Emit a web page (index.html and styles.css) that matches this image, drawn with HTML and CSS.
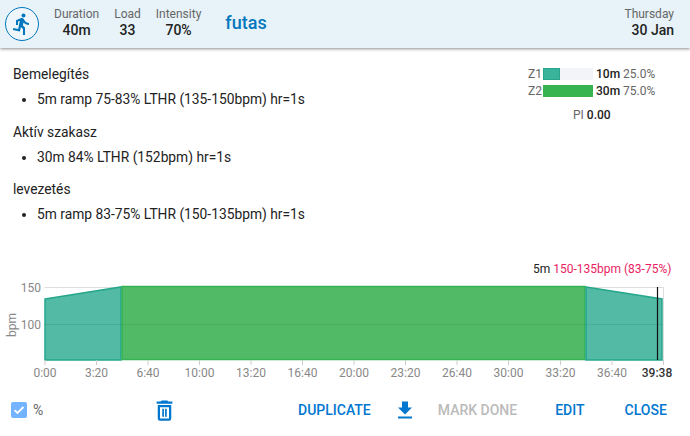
FILE: index.html
```html
<!DOCTYPE html>
<html lang="en">
<head>
<meta charset="utf-8">
<title>futas</title>
<link rel="stylesheet" href="styles.css">
</head>
<body>
<div class="dialog">
  <header class="head">
    <div class="avatar">
      <svg viewBox="0 0 24 24" width="24" height="24"><path fill="#0277bd" d="M13.49 5.48c1.1 0 2-.9 2-2s-.9-2-2-2-2 .9-2 2 .9 2 2 2zm-3.6 13.9l1-4.4 2.1 2v6h2v-7.5l-2.1-2 .6-3c1.3 1.5 3.3 2.5 5.5 2.5v-2c-1.9 0-3.5-1-4.3-2.4l-1-1.6c-.4-.6-1-1-1.7-1-.3 0-.5.1-.8.1l-5.2 2.2v4.7h2v-3.4l1.8-.7-1.6 8.1-4.9-1-.4 2 7 1.4z"/></svg>
    </div>
    <div class="stat"><span class="lbl">Duration</span><b>40m</b></div>
    <div class="stat"><span class="lbl">Load</span><b>33</b></div>
    <div class="stat"><span class="lbl">Intensity</span><b>70%</b></div>
    <div class="title">futas</div>
    <div class="stat date"><span class="lbl">Thursday</span><b>30 Jan</b></div>
  </header>
  <main class="body">
    <section class="desc">
      <p>Bemelegítés</p>
      <ul><li>5m ramp 75-83% LTHR (135-150bpm) hr=1s</li></ul>
      <p>Aktív szakasz</p>
      <ul><li>30m 84% LTHR (152bpm) hr=1s</li></ul>
      <p>levezetés</p>
      <ul><li>5m ramp 83-75% LTHR (150-135bpm) hr=1s</li></ul>
    </section>
    <aside class="zones">
      <div class="zone"><span class="zn">Z1</span><span class="track"><span class="fill z1" style="width:34%"></span></span><b>10m</b><span class="pct">25.0%</span></div>
      <div class="zone"><span class="zn">Z2</span><span class="track"><span class="fill z2" style="width:100%"></span></span><b>30m</b><span class="pct">75.0%</span></div>
      <div class="pi">PI <b>0.00</b></div>
    </aside>
  </main>
  <section class="chart">
    <svg viewBox="0 0 690 130" width="690" height="130">
      <text class="tip" x="533" y="13">5m <tspan fill="#e91e63">150-135bpm (83-75%)</tspan></text>
      <g stroke="#ddd" fill="none">
        <path d="M44.500 27.500H663.500M44.500 64.500H663.500M663.500 27.500V100"/>
      </g>
      <text class="ax" x="41" y="32" text-anchor="end">150</text>
      <text class="ax" x="41" y="69" text-anchor="end">100</text>
      <text class="ax" transform="translate(16 77) rotate(-90)">bpm</text>
      <path d="M45 39L121 27V100H45Z" fill="#52baa5" stroke="#26a68d" stroke-width="1.500"/>
      <path d="M122 26.500H585V99.500H122Z" fill="#50ba66" stroke="#35b355" stroke-width="1.500"/>
      <path d="M586 27L662 39V100H586Z" fill="#52baa5" stroke="#26a68d" stroke-width="1.500"/>
      <path d="M45 64.500H662" stroke="#000" stroke-opacity=".07"/>
      <path d="M657.500 27V100" stroke="#111" stroke-width="1.200"/>
      <g stroke="#ccc">
        <path d="M45 100v5M96.500 100v5M148 100v5M199.500 100v5M251 100v5M302.500 100v5M354 100v5M405.500 100v5M457 100v5M508.500 100v5M560.500 100v5M612 100v5M663.500 100v5"/>
      </g>
      <g class="ax" text-anchor="middle">
        <text x="45" y="117">0:00</text><text x="96.500" y="117">3:20</text><text x="148" y="117">6:40</text><text x="199.500" y="117">10:00</text><text x="251" y="117">13:20</text><text x="302.500" y="117">16:40</text><text x="354" y="117">20:00</text><text x="405.500" y="117">23:20</text><text x="457" y="117">26:40</text><text x="508.500" y="117">30:00</text><text x="560.500" y="117">33:20</text><text x="612" y="117">36:40</text>
      </g>
      <text class="ax end" x="657" y="117" text-anchor="middle">39:38</text>
    </svg>
  </section>
  <footer class="foot">
    <label class="check"><span class="box"><svg viewBox="0 0 16 16" width="16" height="16"><path d="M3.500 8.200l3 2.800 6-6" fill="none" stroke="#fff" stroke-width="1.800"/></svg></span>%</label>
    <button class="icon trash" type="button" aria-label="Delete"><svg viewBox="0 0 24 24" width="27" height="27"><path fill="#0277d0" d="M6 19a2 2 0 0 0 2 2h8a2 2 0 0 0 2-2V7H6v12zM8 9h8v10H8V9zm7.500-5l-1-1h-5l-1 1H5v2h14V4h-3.500z"/><path fill="#0277d0" d="M10 10.500h1.500v7H10zM12.500 10.500H14v7h-1.500z"/></svg></button>
    <button class="btn dup" type="button">DUPLICATE</button>
    <button class="icon dl" type="button" aria-label="Download"><svg viewBox="0 0 24 24" width="24" height="24"><path fill="#0277d0" d="M19 9.500h-4v-6H9v6H5l7 7 7-7zM5 18.500v2h14v-2H5z"/></svg></button>
    <button class="btn off" type="button">MARK DONE</button>
    <button class="btn edit" type="button">EDIT</button>
    <button class="btn close" type="button">CLOSE</button>
  </footer>
</div>
</body>
</html>
```
FILE: styles.css
```css
* { box-sizing: border-box; }
html, body { margin: 0; padding: 0; }
body { width: 690px; height: 436px; overflow: hidden; background: #fff; font-family: Roboto, sans-serif; color: #222; }
.dialog { display: flex; flex-direction: column; height: 436px; }
.head { height: 48px; flex: none; display: flex; align-items: center; padding: 0 16px 4px 5px; background: #e7f2f9; box-shadow: 0 1px 3px rgba(0,0,0,.45); position: relative; color: #222; }
.avatar { width: 34px; height: 34px; border: 1px solid #0277bd; border-radius: 50%; display: flex; align-items: center; justify-content: center; background: #eef6fb; margin: 4px 15px 0 0; }
.stat { display: flex; flex-direction: column; align-items: center; margin-right: 15px; font-size: 14px; line-height: 16px; }
.stat .lbl { font-size: 12px; color: #666; line-height: 16px; }
.stat b { font-weight: 500; font-size: 14px; }
.title { flex: 1; color: #0277bd; font-size: 18px; font-weight: 500; margin-left: 9px; }
.date { margin-right: 0; align-items: flex-end; }
.body { flex: none; height: 203px; display: flex; justify-content: space-between; padding: 17px 0 0 13px; font-size: 13.8px; }
.desc p { margin: 0; line-height: 18px; }
.desc ul { margin: 9px 0 15.500px; padding: 0 0 0 24px; line-height: 15px; }
.desc ul li { line-height: 15px; }
.zones { width: 162px; padding-top: 0; font-size: 12px; color: #666; }
.zone { display: flex; align-items: center; height: 17px; }
.zn { width: 15px; }
.track { width: 50px; height: 12px; background: #f3f3fa; display: block; margin-right: 3px; }
.fill { display: block; height: 12px; }
.z1 { background: #3ab39b; border: 1px solid #26a68d; }
.z2 { background: #37b34f; }
.zone b { font-weight: 500; color: #222; margin-right: 3px; }
.pi { padding: 9px 0 0 45px; }
.pi b { font-weight: 500; color: #222; }
.chart { flex: none; height: 130px; margin-top: 9px; font-size: 12px; }
.chart svg { display: block; }
.ax, .ax text { font-family: Roboto, sans-serif; font-size: 12px; fill: #888; }
.ax.end { fill: #333; font-weight: 500; }
.tip { font-family: Roboto, sans-serif; font-size: 12px; fill: #222; }
.foot { flex: 1; display: flex; align-items: center; padding: 0 14px 6px 11px; font-size: 14px; font-weight: 500; }
.check { display: flex; align-items: center; font-weight: 400; font-size: 14px; color: #666; width: 140px; }
.box { width: 16px; height: 16px; border-radius: 2px; background: #74b3ff; margin-right: 6px; display: flex; }
button { border: 0; background: none; padding: 0; font: inherit; color: #0277d0; display: flex; }
.trash { width: 27px; margin-right: 120px; }
.dup { margin-right: 22px; }
.dl { margin-right: 21px; }
.off { color: #bbb; margin-right: 38px; }
.edit { margin-right: 40px; }
```
